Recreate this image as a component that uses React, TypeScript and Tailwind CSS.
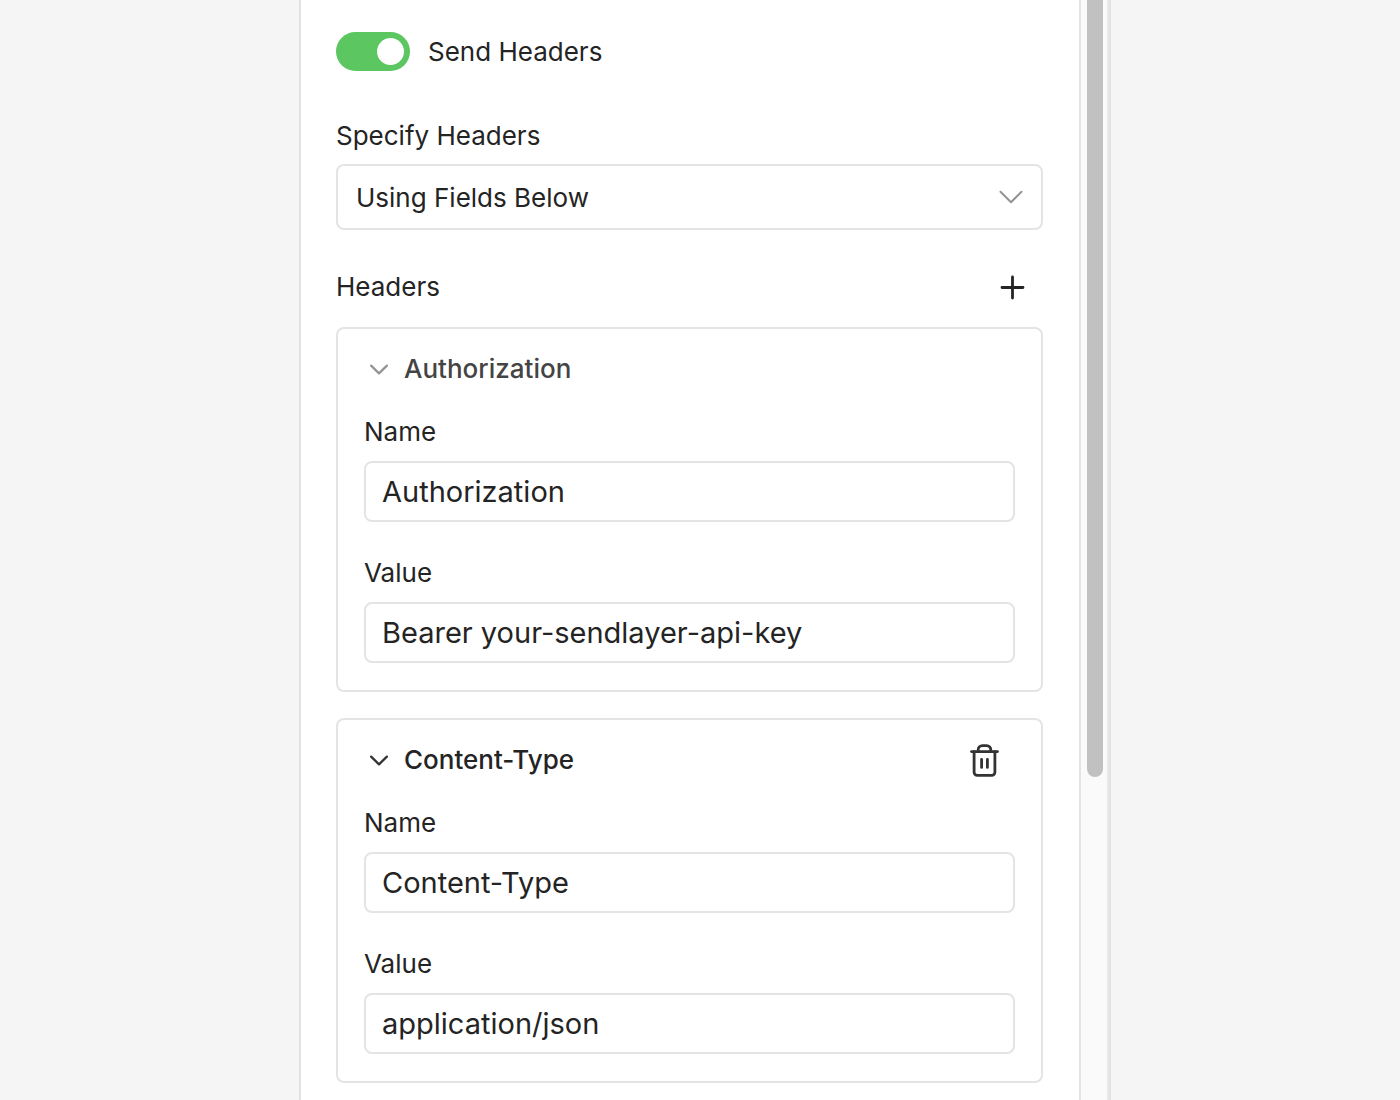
import { useId, useState } from 'react'
import clsx from 'clsx'

type Header = {
  name: string
  value: string
  active: boolean
}

const initialHeaders: Header[] = [
  { name: 'Authorization', value: 'Bearer your-sendlayer-api-key', active: false },
  { name: 'Content-Type', value: 'application/json', active: true },
]

function Chevron({ className }: { className?: string }) {
  return (
    <svg viewBox="0 0 24 14" fill="none" stroke="currentColor" strokeLinecap="round" strokeLinejoin="round" className={className}>
      <path d="M1.5 1.8L12 12.2 22.5 1.8" />
    </svg>
  )
}

function TrashIcon() {
  return (
    <svg width="29" height="33" viewBox="0 0 29 33" fill="none" stroke="currentColor" strokeWidth="2.8" strokeLinecap="round" strokeLinejoin="round">
      <path d="M1.5 7.6h26" />
      <path d="M8.2 7.6V5.8a4.2 4.2 0 0 1 4.2-4.2h4.2a4.2 4.2 0 0 1 4.2 4.2v1.8" />
      <path d="M4.1 7.6v20.6a3.2 3.2 0 0 0 3.2 3.2h14.4a3.2 3.2 0 0 0 3.2-3.2V7.6" />
      <path d="M11.6 15.4v8M17.4 15.4v8" />
    </svg>
  )
}

function Field({ label, value, onChange }: { label: string; value: string; onChange: (v: string) => void }) {
  const id = useId()
  return (
    <div className="flex flex-col gap-[13px]">
      <label htmlFor={id} className="text-[26px] leading-8">
        {label}
      </label>
      <input
        id={id}
        type="text"
        value={value}
        onChange={(e) => onChange(e.target.value)}
        className="h-[61px] w-full rounded-lg border-2 border-[#e4e4e4] bg-white px-4 text-[29px] outline-none"
      />
    </div>
  )
}

function HeaderCard({ header, onChange }: { header: Header; onChange: (h: Header) => void }) {
  const [title] = useState(header.name)
  return (
    <section className="rounded-lg border-2 border-[#e4e4e4] px-[26px] pt-6 pb-[27px]">
      <div className="mb-[31px] flex h-8 items-center justify-between pr-4">
        <button
          type="button"
          className={clsx(
            'flex items-center gap-4 pl-1.5 text-[26px] leading-8 font-medium',
            header.active ? 'text-[#242424]' : 'text-[#444444]'
          )}
        >
          <Chevron className={clsx('h-[11px] w-[18px] stroke-3', header.active ? 'text-[#333333]' : 'text-[#949494]')} />
          {title}
        </button>
        {header.active && (
          <button type="button" aria-label="Delete header" className="text-[#333333]">
            <TrashIcon />
          </button>
        )}
      </div>
      <div className="flex flex-col gap-[35px]">
        <Field label="Name" value={header.name} onChange={(name) => onChange({ ...header, name })} />
        <Field label="Value" value={header.value} onChange={(value) => onChange({ ...header, value })} />
      </div>
    </section>
  )
}

export default function App() {
  const [sendHeaders, setSendHeaders] = useState(true)
  const [headers, setHeaders] = useState(initialHeaders)

  const updateHeader = (index: number, next: Header) =>
    setHeaders(headers.map((h, i) => (i === index ? next : h)))

  return (
    <div className="flex min-h-screen justify-center bg-[#f5f5f5] pl-2.5 font-['Inter',sans-serif] text-[#242424]">
      <div className="flex w-full max-w-[812px] border-x-2 border-[#e2e2e2] bg-white">
        <main className="min-w-0 flex-1 pt-8 pr-9 pb-4 pl-[35px]">
          <label className="flex w-fit items-center gap-[18px] text-[26px] leading-8">
            <input
              type="checkbox"
              role="switch"
              checked={sendHeaders}
              onChange={(e) => setSendHeaders(e.target.checked)}
              className="h-[39px] w-[74px] appearance-none rounded-full bg-[#bdbdbd] p-1.5 before:block before:size-[27px] before:rounded-full before:bg-white checked:bg-[#5cc661] checked:before:ml-auto"
            />
            Send Headers
          </label>

          <div className="mt-[49px] flex flex-col gap-3">
            <label htmlFor="specify-headers" className="text-[26px] leading-8">
              Specify Headers
            </label>
            <div className="relative">
              <select
                id="specify-headers"
                className="h-[66px] w-full appearance-none rounded-lg border-2 border-[#e4e4e4] bg-white px-[18px] text-[26px] outline-none"
              >
                <option>Using Fields Below</option>
                <option>Using JSON</option>
              </select>
              <Chevron className="pointer-events-none absolute top-1/2 right-5 h-3.5 w-6 -translate-y-1/2 stroke-2 text-[#949494]" />
            </div>
          </div>

          <div className="mt-[41px] mb-6 flex items-center justify-between pr-[18px]">
            <h2 className="text-[26px] leading-8">Headers</h2>
            <button type="button" aria-label="Add header" onClick={() => setHeaders([...headers, { name: '', value: '', active: true }])}>
              <svg width="25" height="25" viewBox="0 0 25 25" fill="none" stroke="currentColor" strokeWidth="2.8" strokeLinecap="round">
                <path d="M12.5 2v21M2 12.5h21" />
              </svg>
            </button>
          </div>

          <div className="flex flex-col gap-[26px]">
            {headers.map((header, i) => (
              <HeaderCard key={i} header={header} onChange={(next) => updateHeader(i, next)} />
            ))}
          </div>
        </main>

        {/* Scroll track */}
        <div className="flex w-[30px] shrink-0 justify-end border-r-2 border-l-2 border-r-[#e8e8e8] border-l-[#e4e4e4] bg-[#fafafa] pr-1">
          <div className="h-[777px] w-4 rounded-b-full bg-[#c1c1c1]" />
        </div>
      </div>
    </div>
  )
}
